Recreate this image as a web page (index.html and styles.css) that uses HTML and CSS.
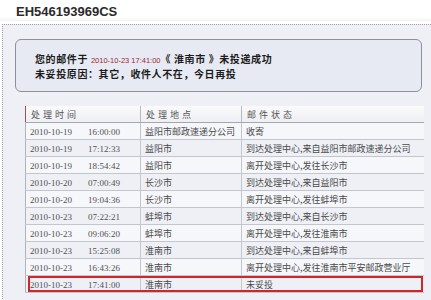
FILE: index.html
```html
<!DOCTYPE html>
<html>
<head>
<meta charset="utf-8">
<link rel="stylesheet" href="styles.css">
</head>
<body>
<div class="title">EH546193969CS</div>
<div class="panel">
  <div class="notice">
    <div class="line">您的邮件于 <span class="when">2010-10-23 17:41:00</span>《 淮南市 》未投递成功</div>
    <div class="line">未妥投原因：其它，收件人不在，今日再投</div>
  </div>
  <div class="tablewrap">
    <table class="track">
      <colgroup><col class="c1"><col class="c2"><col class="c3"></colgroup>
      <thead>
        <tr><th class="first">处理时间</th><th>处理地点</th><th>邮件状态</th></tr>
      </thead>
      <tbody>
        <tr><td><span class="d">2010-10-19</span><span class="t">16:00:00</span></td><td>益阳市邮政速递分公司</td><td>收寄</td></tr>
        <tr><td><span class="d">2010-10-19</span><span class="t">17:12:33</span></td><td>益阳市</td><td>到达处理中心,来自益阳市邮政速递分公司</td></tr>
        <tr><td><span class="d">2010-10-19</span><span class="t">18:54:42</span></td><td>益阳市</td><td>离开处理中心,发往长沙市</td></tr>
        <tr><td><span class="d">2010-10-20</span><span class="t">07:00:49</span></td><td>长沙市</td><td>到达处理中心,来自益阳市</td></tr>
        <tr><td><span class="d">2010-10-20</span><span class="t">19:04:36</span></td><td>长沙市</td><td>离开处理中心,发往蚌埠市</td></tr>
        <tr><td><span class="d">2010-10-23</span><span class="t">07:22:21</span></td><td>蚌埠市</td><td>到达处理中心,来自长沙市</td></tr>
        <tr><td><span class="d">2010-10-23</span><span class="t">09:06:20</span></td><td>蚌埠市</td><td>离开处理中心,发往淮南市</td></tr>
        <tr><td><span class="d">2010-10-23</span><span class="t">15:25:08</span></td><td>淮南市</td><td>到达处理中心,来自蚌埠市</td></tr>
        <tr><td><span class="d">2010-10-23</span><span class="t">16:43:26</span></td><td>淮南市</td><td>离开处理中心,发往淮南市平安邮政营业厅</td></tr>
        <tr><td><span class="d">2010-10-23</span><span class="t">17:41:00</span></td><td>淮南市</td><td>未妥投</td></tr>
      </tbody>
    </table>
    <div class="highlight"></div>
  </div>
</div>
</body>
</html>
```
FILE: styles.css
```css
html, body {
  margin: 0;
  padding: 0;
  background: #ffffff;
  width: 431px;
  height: 300px;
  overflow: hidden;
}
body {
  font-family: "Noto Sans CJK SC", "Liberation Sans", sans-serif;
}
.title {
  height: 21px;
  line-height: 24px;
  padding-left: 16px;
  font-family: "Liberation Sans", Arial, sans-serif;
  font-weight: bold;
  font-size: 13px;
  color: #2a2a2a;
  background: linear-gradient(#ffffff 0, #ffffff 17px, #f3f3f5 21px);
}
.panel {
  margin-top: 3px;
  margin-left: 2px;
  border-top: 1px dotted #a898a8;
  border-left: 1px dotted #a898a8;
  background: #eef0f6;
  padding: 14px 0 20px 12px;
}
.notice {
  box-sizing: border-box;
  height: 53px;
  margin-right: 9px;
  border: 1px solid #8d8f9a;
  border-radius: 6px;
  background: #e8eaf3;
  padding: 12px 0 0 19px;
}
.line {
  font-weight: bold;
  font-size: 10px;
  line-height: 13px;
  letter-spacing: 0.6px;
  color: #1c1c1c;
  white-space: nowrap;
}
.when {
  font-family: "Liberation Sans", sans-serif;
  font-weight: normal;
  font-size: 7.5px;
  letter-spacing: 0;
  color: #9a2436;
}
.tablewrap {
  position: relative;
  margin-top: 14px;
  margin-left: 10px;
  width: 398px;
}
.track {
  border-collapse: collapse;
  width: 398px;
  table-layout: fixed;
  font-size: 9px;
  color: #4a4a4a;
}
.c1 { width: 115px; }
.c2 { width: 101px; }
.c3 { width: 182px; }
.track th {
  height: 16px;
  padding: 0 0 0 5px;
  text-align: left;
  font-weight: normal;
  letter-spacing: 3px;
  color: #555;
  background: linear-gradient(#fafafc, #eeeff4);
  border-bottom: 1px solid #a5a7b0;
  border-left: 1px solid #b8bac2;
}
.track th.first {
  border-left: 1px solid #9a5060;
}
.track td {
  height: 16px;
  padding: 0 0 0 4px;
  white-space: nowrap;
  overflow: hidden;
  background: #f6f7fb;
  border-bottom: 1px solid #c4c6ce;
  border-left: 1px solid #c4c6ce;
}
.track tr:nth-child(even) td {
  background: #eef0f6;
}
.track td:first-child {
  border-left: 1px solid #b0b2bc;
}
.d, .t {
  font-family: "Liberation Serif", serif;
  font-size: 9px;
  color: #505050;
}
.d {
  display: inline-block;
  width: 58px;
}
.highlight {
  position: absolute;
  left: 3px;
  right: 0;
  bottom: 1px;
  height: 16px;
  border: 2px solid #d0262b;
  box-sizing: border-box;
}
```
